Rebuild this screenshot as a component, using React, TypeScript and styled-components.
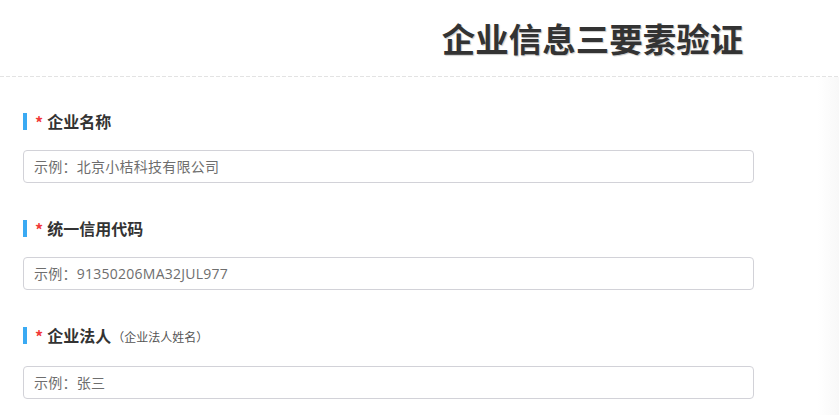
import styled, { createGlobalStyle } from "styled-components";

const GlobalStyle = createGlobalStyle`
  html, body {
    margin: 0;
    padding: 0;
    background: #ffffff;
  }
  body {
    font-family: "Microsoft YaHei", "Noto Sans CJK SC", "Noto Sans", sans-serif;
    color: #333333;
  }
`;

const fields = [
  { label: "企业名称", placeholder: "示例：北京小桔科技有限公司" },
  { label: "统一信用代码", placeholder: "示例：91350206MA32JUL977" },
  { label: "企业法人", note: "（企业法人姓名）", placeholder: "示例：张三" },
];

const App = () => {
  return (
    <Page>
      <GlobalStyle />
      <Header>
        <Title>企业信息三要素验证</Title>
      </Header>
      <Form>
        {fields.map((f) => (
          <Field key={f.label}>
            <Label $hasNote={!!f.note}>
              <Bar />
              <Star>*</Star>
              <LabelText>{f.label}</LabelText>
              {f.note && <Note>{f.note}</Note>}
            </Label>
            <Input placeholder={f.placeholder} />
          </Field>
        ))}
      </Form>
    </Page>
  );
};

export default App;

const Page = styled.div`
  width: 839px;
  height: 415px;
  overflow: hidden;
  background: #ffffff;
`;

const Header = styled.div`
  height: 76px;
  padding-left: 346px;
  display: flex;
  align-items: center;
  justify-content: center;
  background-image: repeating-linear-gradient(to right, #e3e3e3 0 4px, transparent 4px 6px);
  background-size: 100% 1px;
  background-position: left bottom;
  background-repeat: no-repeat;
  padding-bottom: 1px;
`;

const Title = styled.h1`
  margin: 0;
  font-size: 33.5px;
  font-weight: 700;
  line-height: 1;
  color: #333333;
  text-shadow: 1px 1px 1px rgba(0, 0, 0, 0.22);
`;

const Form = styled.div`
  padding: 34px 0 0 23px;
  height: 100%;
  background: linear-gradient(to right, #ffffff 0, #ffffff 818px, #f8f8f8 839px);
`;

const Field = styled.div`
  width: 731px;
  margin-bottom: 35px;
`;

const Label = styled.div<{ $hasNote?: boolean }>`
  display: flex;
  align-items: center;
  height: 20px;
  margin-bottom: ${(p) => (p.$hasNote ? "21px" : "19px")};
`;

const Bar = styled.span`
  width: 4px;
  height: 17px;
  background: #3aaaf3;
  margin-right: 8px;
`;

const Star = styled.span`
  color: #f23a3a;
  font-size: 16px;
  font-weight: 700;
  margin-right: 4px;
  line-height: 20px;
  position: relative;
  top: 1px;
`;

const LabelText = styled.span`
  font-size: 16px;
  font-weight: 700;
  color: #333333;
  line-height: 20px;
`;

const Note = styled.span`
  font-size: 12px;
  color: #555555;
  line-height: 20px;
  margin-left: 1px;
  position: relative;
  top: 2px;
`;

const Input = styled.input`
  display: block;
  box-sizing: border-box;
  width: 100%;
  height: 33px;
  padding: 0 10px;
  border: 1px solid #d2d2d8;
  border-radius: 4px;
  font-family: "Open Sans", "Noto Sans CJK SC", sans-serif;
  font-size: 14px;
  letter-spacing: 0.25px;
  color: #333333;
  outline: none;
  &::placeholder {
    color: #6e6e6e;
  }
`;
